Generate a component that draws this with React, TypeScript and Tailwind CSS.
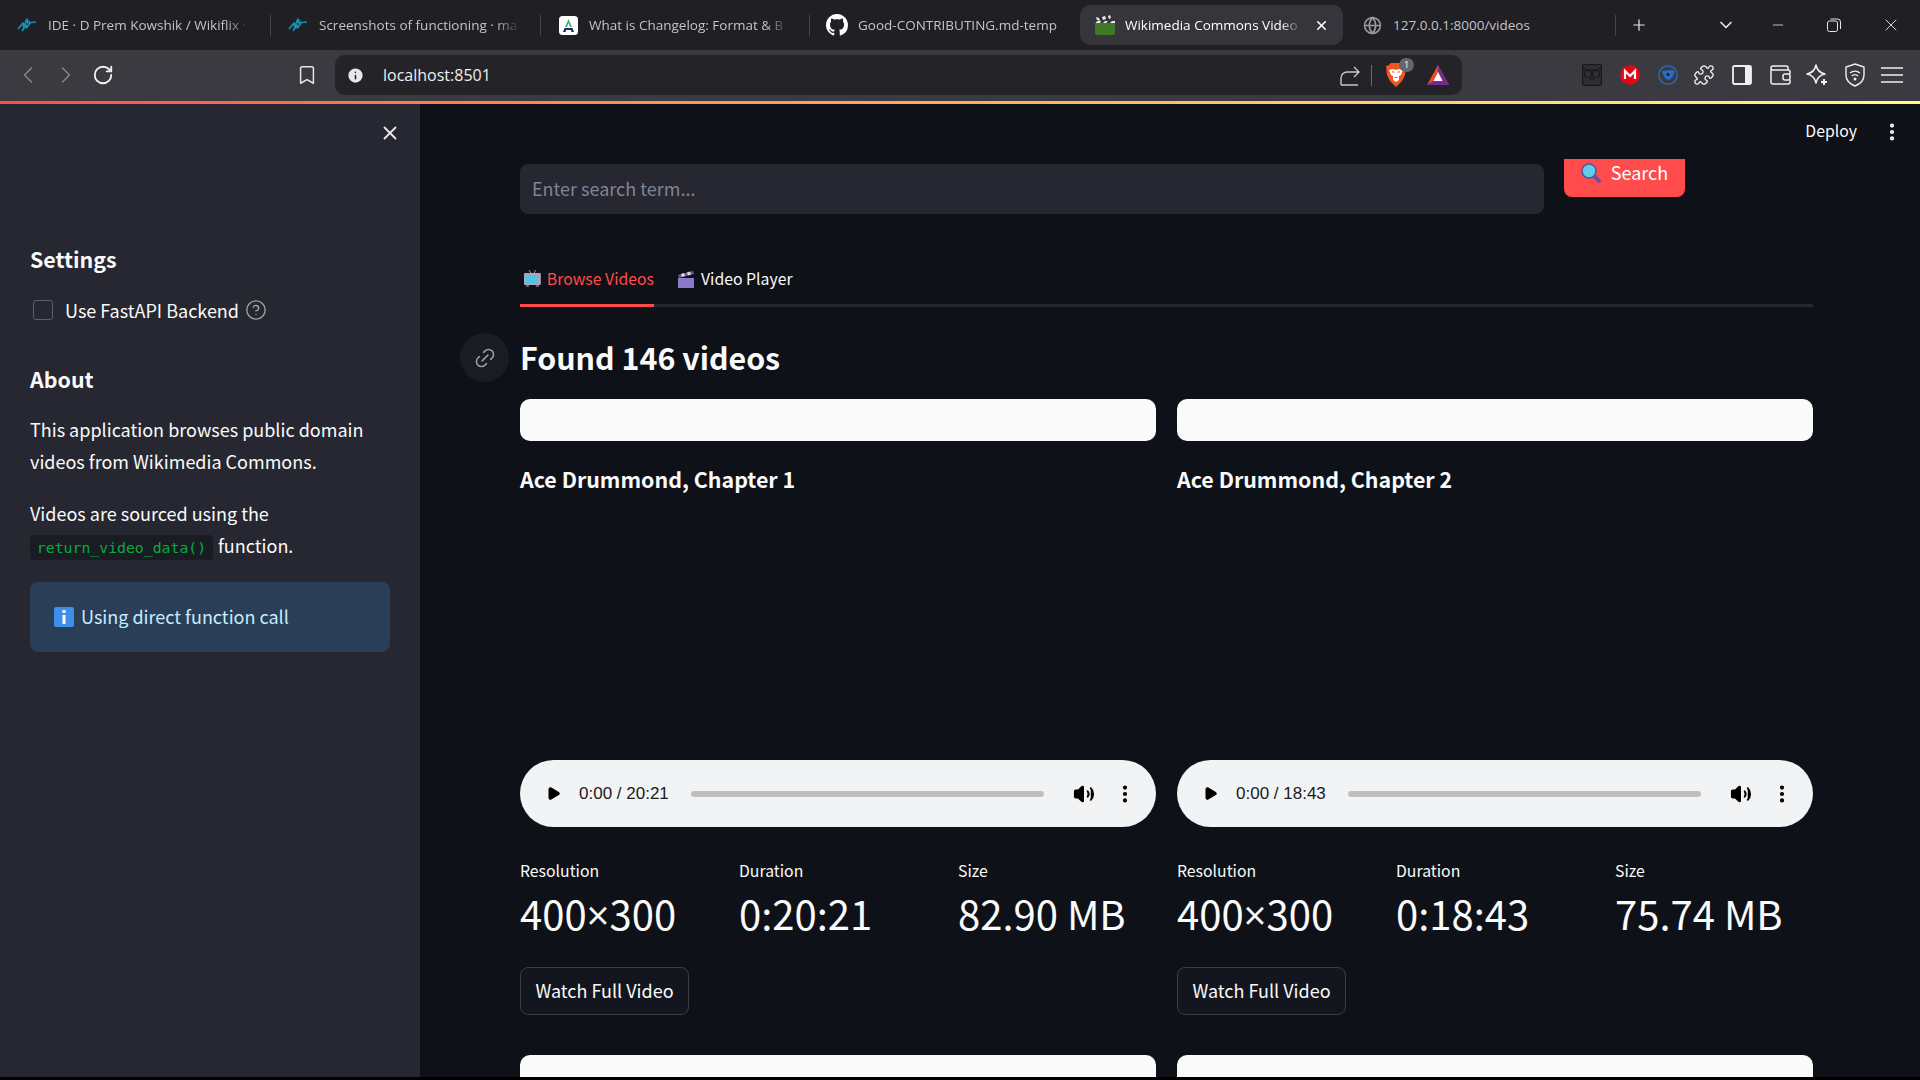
import { ChevronLeft, ChevronRight, RotateCw, Bookmark, Info, Puzzle, Plus, ChevronDown, Minus, X, CircleHelp, Link2, EllipsisVertical, Volume2, Play, Globe } from "lucide-react";

const Wave = () => (
  <svg width="20" height="14" viewBox="0 0 20 14" fill="none" stroke="#1f8fae" strokeWidth="1.7" strokeLinejoin="round"><path d="M1 11 L6 5 L6.5 9 L10 1 L10.5 5 L19 4" /><path d="M5 13 L9 7 L9.5 10 L13 5" /><path d="M8 3 H13" strokeWidth="1.2" /></svg>
);
const Clapper = () => (
  <svg width="20" height="20" viewBox="0 0 20 20"><path d="M0 8h20v10a2 2 0 01-2 2H2a2 2 0 01-2-2z" fill="#3f7a28" /><path d="M1 2l3 1 1 3-3-1zM7 2l3-1 1 3-3 1zM13 1l2-1 1 3-2 1zM1 7l2-1h3l-1 2H1zM8 8l2-2h3l-2 2zM15 8l2-2h3v2z" fill="#ededed" /></svg>
);
const Tab = ({ icon, text, w, sep = true }: { icon: React.ReactNode; text: string; w: number; sep?: boolean }) => (
  <div className="flex h-full shrink-0 items-center" style={{ width: w }}>
    <div className="flex w-[48px] shrink-0 items-center justify-center pl-[6px]">{icon}</div>
    <div className="min-w-0 flex-1 overflow-hidden whitespace-nowrap text-[13.5px] text-[#c4c4c8] [mask-image:linear-gradient(to_right,black_88%,transparent)]">{text}</div>
    {sep && <div className="ml-[20px] h-[21px] w-px shrink-0 bg-[#45454b]" />}
  </div>
);

function Chrome() {
  return (
    <>
      <div className="flex h-[50px] shrink-0 items-center bg-[#1f1f24] [font-family:'Open_Sans',sans-serif]">
        <Tab w={271} icon={<Wave />} text="IDE · D Prem Kowshik / Wikiflix ·" />
        <Tab w={270} icon={<Wave />} text="Screenshots of functioning · ma" />
        <Tab w={269} icon={<svg width="19" height="19" viewBox="0 0 19 19"><rect width="19" height="19" rx="3.5" fill="#fff" /><path d="M9.5 3 L6 11 H8 L9.5 7 L11 11 H13 Z" fill="#3db06a" /><path d="M5.5 12 H13.5 L15 16 H12.5 L12 14 H7 L6.5 16 H4 Z" fill="#1c2a6e" /></svg>} text="What is Changelog: Format & B" />
        <Tab w={270} icon={<svg width="22" height="22" viewBox="0 0 16 16" fill="#fff"><path d="M8 0C3.58 0 0 3.58 0 8c0 3.54 2.29 6.53 5.47 7.59.4.07.55-.17.55-.38 0-.19-.01-.82-.01-1.49-2.01.37-2.53-.49-2.69-.94-.09-.23-.48-.94-.82-1.13-.28-.15-.68-.52-.01-.53.63-.01 1.08.58 1.23.82.72 1.21 1.87.87 2.33.66.07-.52.28-.87.51-1.07-1.78-.2-3.64-.89-3.64-3.95 0-.87.31-1.59.82-2.15-.08-.2-.36-1.02.08-2.12 0 0 .67-.21 2.2.82.64-.18 1.32-.27 2-.27s1.36.09 2 .27c1.53-1.04 2.2-.82 2.2-.82.44 1.1.16 1.92.08 2.12.51.56.82 1.27.82 2.15 0 3.07-1.87 3.75-3.65 3.95.29.25.54.73.54 1.48 0 1.07-.01 1.93-.01 2.2 0 .21.15.46.55.38A8.01 8.01 0 0016 8c0-4.42-3.58-8-8-8z" /></svg>} text="Good-CONTRIBUTING.md-temp" sep={false} />
        <div className="flex h-[40px] w-[263px] shrink-0 items-center rounded-[10px] bg-[#35353b] pl-[15px] pr-[14px]">
          <Clapper />
          <div className="ml-[10px] min-w-0 flex-1 overflow-hidden whitespace-nowrap text-[13.5px] text-white [mask-image:linear-gradient(to_right,black_88%,transparent)]">Wikimedia Commons Video</div>
          <X size={15} strokeWidth={2.5} className="ml-[12px] shrink-0 text-white" />
        </div>
        <div className="ml-[20px] flex w-[252px] shrink-0 items-center">
          <Globe size={19} className="shrink-0 text-[#9a9a9e]" />
          <div className="ml-[11px] whitespace-nowrap text-[13.5px] text-[#c4c4c8]">127.0.0.1:8000/videos</div>
        </div>
        <div className="h-[21px] w-px shrink-0 bg-[#45454b]" />
        <Plus size={18} strokeWidth={1.6} className="ml-[14px] shrink-0 text-[#e8e8e8]" />
        <ChevronDown size={20} strokeWidth={2} className="ml-[68px] shrink-0 text-[#e8e8e8]" />
        <Minus size={16} strokeWidth={1.2} className="ml-[34px] shrink-0 text-[#e8e8e8]" />
        <svg width="14" height="14" viewBox="0 0 14 14" fill="none" stroke="#e8e8e8" strokeWidth="1" className="ml-[41px] shrink-0"><rect x="0.5" y="3" width="10" height="10.5" rx="2" /><path d="M3.5 1h7a3 3 0 013 3v7" /></svg>
        <X size={20} strokeWidth={1.1} className="ml-[40px] shrink-0 text-[#e8e8e8]" />
      </div>
      <div className="flex h-[51px] shrink-0 items-start bg-[#3a3a40] pt-[5px]">
        <div className="flex h-[40px] w-[335px] shrink-0 items-center">
          <ChevronLeft size={28} strokeWidth={1.3} className="ml-[14px] text-[#85858a]" />
          <ChevronRight size={28} strokeWidth={1.3} className="ml-[10px] text-[#85858a]" />
          <RotateCw size={22} strokeWidth={2} className="ml-[12px] text-[#f2f2f2]" />
          <Bookmark size={22} strokeWidth={1.6} className="ml-[182px] text-[#e8e8e8]" />
        </div>
        <div className="flex h-[40px] w-[1127px] shrink-0 items-center rounded-[10px] bg-[#232328] [font-family:'Open_Sans',sans-serif]">
          <Info size={19} fill="#e8e8e8" stroke="#232328" strokeWidth={2} className="ml-[11px]" />
          <div className="ml-[18px] flex-1 text-[16px] text-[#f0f0f0]">localhost:8501</div>
          <svg width="21" height="21" viewBox="0 0 21 21" fill="none" stroke="#c8c8c8" strokeWidth="1.4"><path d="M1 20h17M1 20v-7a6 6 0 016-6h11M14 2l5 5-5 5" /></svg>
          <div className="ml-[10px] h-[21px] w-px bg-[#6a6a6e]" />
          <div className="relative ml-[14px] h-[24px] w-[20px]">
            <svg width="20" height="24" viewBox="0 0 20 24"><path d="M5 0h10l2 2 3 1-1 9-3 6-6 6-6-6-3-6-1-9 3-1z" fill="#f0561d" /><path d="M3 7l4-1 3 1 3-1 4 1-2 5-2 1v4l-3 2-3-2v-4l-2-1z" fill="#fff" /><path d="M6 9h2.5M11.5 9H14M8.5 14.5h3" stroke="#f0561d" strokeWidth="1.2" /></svg>
            <div className="absolute left-[13px] top-[-5px] flex h-[14px] w-[15px] items-center justify-center rounded-full bg-[#64666c] text-[9px] font-normal text-white">1</div>
          </div>
          <svg width="24" height="24" viewBox="0 0 24 24" className="ml-[20px]"><path d="M12 2 L23 22 H1 Z" fill="#ee4a1f" /><path d="M12 2 L23 22 H1 L7 18 H16.5 L12 9 Z" fill="#6f2c91" /><path d="M12 9 L16.5 18 H7.5 Z" fill="#fff" /></svg>
          <div className="w-[12px]" />
        </div>
        <div className="flex h-[40px] flex-1 items-center">
          <svg width="20" height="22" viewBox="0 0 20 22" fill="none" stroke="#17171b" strokeWidth="1.2" className="ml-[120px]"><rect x="0.6" y="0.6" width="18.8" height="20.8" rx="1.5" fill="#2e2e33" /><circle cx="6" cy="10" r="3.5" /><circle cx="14" cy="10" r="3.5" /><path d="M1 4l5 2h8l5-2M8.5 14l1.5 2 1.5-2" /></svg>
          <svg width="20" height="20" viewBox="0 0 20 20" className="ml-[18px]"><circle cx="10" cy="10" r="10" fill="#e30613" /><path d="M5 14V6l5 5 5-5v8" fill="none" stroke="#fff" strokeWidth="2.2" /></svg>
          <svg width="20" height="20" viewBox="0 0 20 20" className="ml-[18px]"><circle cx="10" cy="10" r="9.2" fill="none" stroke="#2b6cc4" strokeWidth="1.3" /><path d="M4 6l12-1c1 4-2 9-5 10C8 15 5 11 4 6z" fill="#2b6cc4" /><circle cx="10" cy="9.5" r="1.6" fill="#15203a" /></svg>
          <Puzzle size={22} strokeWidth={1.5} className="ml-[15px] text-[#f0f0f0]" />
          <svg width="20" height="20" viewBox="0 0 20 20" className="ml-[17px]"><rect x="1" y="1" width="18" height="18" rx="1.5" fill="none" stroke="#f0f0f0" strokeWidth="1.8" /><rect x="13" y="1" width="6" height="18" fill="#f0f0f0" /></svg>
          <svg width="21" height="20" viewBox="0 0 21 20" fill="none" stroke="#f0f0f0" strokeWidth="1.5" className="ml-[18px]"><path d="M1 4v13a2 2 0 002 2h15a2 2 0 002-2v-2M20 9V7a2 2 0 00-2-2H3a2 2 0 01-2-2 2 2 0 012-2h13a2 2 0 012 2v2" /><rect x="13" y="9" width="7" height="6" rx="2" /></svg>
          <svg width="22" height="22" viewBox="0 0 22 22" fill="none" stroke="#f0f0f0" strokeWidth="1.5" strokeLinejoin="round" className="ml-[15px]"><path d="M10 1c1 5 4 8 9 9-5 1-8 4-9 9-1-5-4-8-9-9 5-1 8-4 9-9z" /><path d="M18 15v6M15 18h6" strokeWidth="2" /></svg>
          <svg width="20" height="24" viewBox="0 0 20 24" fill="none" stroke="#f0f0f0" strokeWidth="1.4" className="ml-[17px]"><path d="M10 1l9 3v8c0 5-4 9-9 11-5-2-9-6-9-11V4z" /><path d="M5 10a8 8 0 0110 0M7 13a4 4 0 016 0" /><circle cx="10" cy="16" r="0.8" fill="#f0f0f0" /></svg>
          <svg width="22" height="18" viewBox="0 0 22 18" stroke="#f0f0f0" strokeWidth="1.5" className="ml-[16px]"><path d="M0 2h22M0 9h22M0 16h22" /></svg>
        </div>
      </div>
      <div className="h-[3px] shrink-0 bg-gradient-to-r from-[#ff4b4b] to-[#fffd80]" />
    </>
  );
}

function Sidebar() {
  return (
    <aside className="flex w-[420px] shrink-0 flex-col bg-[#262730] px-[30px] text-[#fafafa]">
      <div className="-mr-[11px] flex h-[58px] items-center justify-end"><X size={22} strokeWidth={2} className="text-[#e8e8e8]" /></div>
      <h2 className="mt-[79px] text-[21.4px] font-bold leading-[36px]">Settings</h2>
      <div className="mt-[21px] flex h-[24px] items-center">
        <div className="ml-[3px] h-[20px] w-[20px] rounded-[3px] border border-[#5d5f69] bg-[#262730]" />
        <span className="ml-[12px] pb-[1px] text-[18px] leading-[24px]">Use FastAPI Backend</span>
        <CircleHelp size={22} strokeWidth={1.5} className="ml-[6px] text-[#a0a1a8]" />
      </div>
      <h2 className="mt-[39px] text-[21.4px] font-bold leading-[36px]">About</h2>
      <p className="mt-[16px] text-[18px] leading-[32px]">This application browses public domain videos from Wikimedia Commons.</p>
      <div className="mt-[20px] text-[18px] leading-[32px]">
        <div>Videos are sourced using the</div>
        <div className="flex items-center">
          <code className="mt-[5px] flex h-[25px] w-[183px] items-center justify-center rounded-[4px] bg-[#1a1c24] [font-family:'DejaVu_Sans_Mono',monospace] text-[14.8px] text-[#09ab3b]">return_video_data()</code>
          <span className="ml-[5px]">function.</span>
        </div>
      </div>
      <div className="mt-[21px] flex h-[70px] items-center rounded-[8px] bg-[#2a3e58] px-[24px] text-[18px] text-[#c7ebff]">
        <svg width="20" height="20" viewBox="0 0 20 20"><rect width="20" height="20" rx="2" fill="#3f8fe8" /><rect x="8.5" y="3" width="3" height="3" fill="#fff" /><rect x="8.5" y="8" width="3" height="9" fill="#fff" /></svg>
        <span className="ml-[7px] pb-[2px]">Using direct function call</span>
      </div>
    </aside>
  );
}

const Metric = ({ label, value }: { label: string; value: React.ReactNode }) => (
  <div className="w-[219px] shrink-0">
    <div className="text-[15.8px] leading-[24px] text-[#fafafa]">{label}</div>
    <div className="mt-[2px] whitespace-nowrap text-[40px] leading-[56px] text-[#fafafa]">{value}</div>
  </div>
);

function Card({ title, total, duration, size }: { title: string; total: string; duration: string; size: string }) {
  return (
    <div className="flex flex-col">
      <div className="h-[42px] rounded-[10px] bg-[#fafafa]" />
      <h3 className="mt-[20px] h-[36px] text-[21.4px] font-bold leading-[36px] text-[#fafafa]">{title}</h3>
      <div className="mt-[263px] flex h-[67px] items-center rounded-[34px] bg-[#f1f3f4] pl-[26px] pr-[20px] text-[#1a1a1a]">
        <Play size={15} fill="#000" stroke="#000" className="shrink-0" />
        <span className="ml-[18px] w-[92px] shrink-0 whitespace-nowrap [font-family:'Liberation_Sans',sans-serif] text-[17px]">0:00 / {total}</span>
        <div className="ml-[20px] h-[6px] flex-1 rounded-full bg-[#bfbfbf]" />
        <Volume2 size={22} fill="#000" stroke="#000" strokeWidth={2} className="ml-[29px] shrink-0" />
        <EllipsisVertical size={22} strokeWidth={2.6} className="ml-[19px] shrink-0 text-black" />
      </div>
      <div className="mt-[32px] flex">
        <Metric label="Resolution" value={<>400<span className="[font-family:'Open_Sans',sans-serif]">×</span>300</>} />
        <Metric label="Duration" value={duration} />
        <Metric label="Size" value={size} />
      </div>
      <button className="mt-[24px] h-[48px] w-[169px] rounded-[8px] border border-[#3b3d45] bg-[#13161e] pb-[2px] text-[18px] text-[#fafafa]">Watch Full Video</button>
    </div>
  );
}

const Tv = () => (
  <svg width="17" height="17" viewBox="0 0 17 17"><path d="M7 3L5 0M10 3l2-3" stroke="#9a9aa5" /><rect y="3" width="17" height="12" rx="1" fill="#a9a6b5" /><rect x="2" y="5" width="11" height="8" fill="#4fc3e8" /><rect x="14.5" y="6" width="1" height="1" fill="#e06a8a" /><rect x="2" y="15" width="3" height="2" fill="#6a6878" /><rect x="12" y="15" width="3" height="2" fill="#6a6878" /></svg>
);
const Clap2 = () => (
  <svg width="17" height="17" viewBox="0 0 17 17"><rect y="7" width="16" height="10" fill="#8a7ac8" /><path d="M0 4l15-4 1 3L1 7z" fill="#6a5aa8" /><path d="M3 3l3-1 1 3-3 1zM9 1.5l3-1 1 3-3 1z" fill="#ddd" /></svg>
);

function Main() {
  return (
    <main className="relative min-w-0 flex-1 overflow-hidden bg-[#0e1117] pl-[100px] pr-[107px] text-[#fafafa]">
      <div className="-mr-[107px] flex h-[55px] items-center justify-end pr-[17px]">
        <span className="pb-[2px] text-[15.8px]">Deploy</span>
        <EllipsisVertical size={22} strokeWidth={2.6} className="ml-[24px] text-[#f0f0f0]" />
      </div>
      <div className="flex items-start">
        <div className="mt-[5px] flex h-[50px] w-[1024px] items-center rounded-[8px] bg-[#262730] px-[12px] pb-[1px] text-[18px] text-[#808495]">Enter search term...</div>
        <div className="ml-[20px] flex h-[38px] w-[121px] items-center justify-center rounded-b-[8px] bg-[#ff4b4b] pb-[11px] text-[18px] text-white">
          <svg width="20" height="20" viewBox="0 0 20 20"><path d="M12 12l6 6" stroke="#7a4a98" strokeWidth="4" strokeLinecap="round" /><circle cx="8" cy="8" r="7" fill="#62cdea" stroke="#4a5c9a" strokeWidth="1.6" /></svg>
          <span className="ml-[10px]">Search</span>
        </div>
      </div>
      <div className="mt-[41px] flex h-[52px] border-b-[3px] border-[#262730]">
        <div className="-mb-[3px] flex h-[52px] w-[134px] shrink-0 items-center whitespace-nowrap border-b-[3px] border-[#ff4b4b] pl-[4px] pb-[2px] text-[#ff4b4b]">
          <Tv /><span className="ml-[6px] text-[15.8px]">Browse Videos</span>
        </div>
        <div className="ml-[24px] flex h-[49px] items-center whitespace-nowrap pb-[1px]">
          <Clap2 /><span className="ml-[6px] text-[15.8px]">Video Player</span>
        </div>
      </div>
      <div className="absolute left-[40px] top-[229px] flex h-[49px] w-[49px] items-center justify-center rounded-full bg-[#191c23]">
        <Link2 size={24} strokeWidth={1.6} className="-rotate-45 text-[#9a9ca3]" />
      </div>
      <h2 className="mt-[26px] h-[66px] text-[30.4px] font-bold leading-[48px]">Found 146 videos</h2>
      <div className="grid grid-cols-2 gap-x-[21px] gap-y-[40px]">
        <Card title="Ace Drummond, Chapter 1" total="20:21" duration="0:20:21" size="82.90 MB" />
        <Card title="Ace Drummond, Chapter 2" total="18:43" duration="0:18:43" size="75.74 MB" />
        <div className="h-[42px] rounded-t-[10px] bg-[#fafafa]" />
        <div className="h-[42px] rounded-t-[10px] bg-[#fafafa]" />
      </div>
    </main>
  );
}

export default function App() {
  return (
    <div className="flex h-[1080px] w-[1920px] flex-col overflow-hidden bg-black [font-family:'Noto_Sans_CJK_SC','Noto_Sans',sans-serif]">
      <Chrome />
      <div className="flex min-h-0 flex-1">
        <Sidebar />
        <Main />
      </div>
      <div className="h-[3px] shrink-0 bg-black" />
    </div>
  );
}
